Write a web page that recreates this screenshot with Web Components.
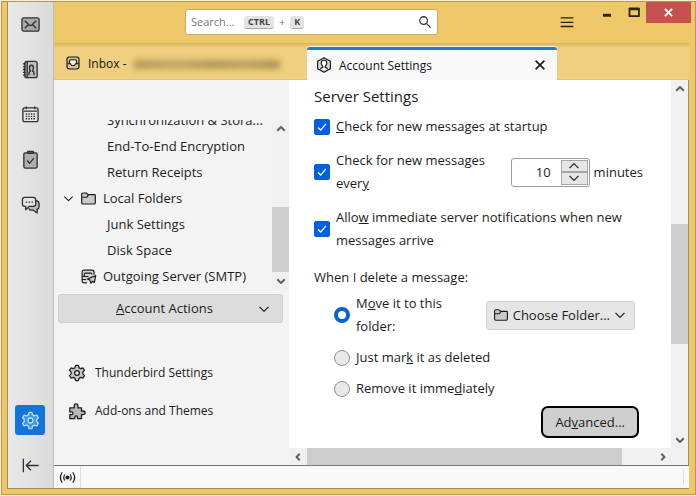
<!DOCTYPE html>
<html lang="en">
<head>
<meta charset="utf-8">
<title>Account Settings</title>
<style>
    html, body { height: 100%; }
    body {
        margin: 0;
        padding: 1px 0 1px 1px;
        box-sizing: border-box;
        background: #f8edcc;
        color: #1c1c20;
        font: 13px/23px "Open Sans", "Noto Sans", sans-serif;
    }
</style>
</head>
<body>
<mail-window></mail-window>

<script>
const resetStyle = `
    *, *::before, *::after { box-sizing: border-box; }
    button, input { font: inherit; color: inherit; margin: 0; }
    button { padding: 0; border: 0; background: none; cursor: pointer; }
    a { color: inherit; text-decoration: none; }
`;

const icons = {
    mail: `<rect x="1" y="3" width="18" height="14" rx="2" fill="#aaa"/><path d="M4 6l4.500 4.500Q10 11.500 11.500 10.500L16 6M4 14l3.500-3.500M16 14l-3.500-3.500"/>`,
    book: `<rect x="4" y="1.500" width="13" height="17" rx="2" fill="#bdbdbd"/><path d="M2 4h3M2 7h3M2 10h3M2 13h3M2 16h3M6.500 2v16M8.500 16v-2q0-1.500 1.500-2.500-1-1-1-3.500 0-2.500 2-2.500T13 8q0 2.500-1 3.500 1.700 1 1.700 2.500v2"/>`,
    calendar: `<rect x="2" y="3" width="16" height="14.500" rx="2" fill="#e8e8e8"/><path d="M3 6.500h14M5.500 1.500v3M14.500 1.500v3"/><path d="M5 9.500h11M5 12h11M5 14.500h11" stroke-dasharray="1.500 1.200"/>`,
    tasks: `<rect x="3" y="3" width="14" height="16" rx="1.500" fill="#b0b0b0"/><path d="M7 3.500V1.500h6v2zM6.500 11l2.500 3 4.500-5.500"/>`,
    chat: `<path d="M15.500 6q3.500 0 3.500 3.500v2.500q0 2.500-2 3v4L13 16H9.500L8 14" fill="#bbb"/><path d="M4 2.500h9q2.500 0 2.500 2.500v4.500q0 2.500-2.500 2.500H8.500L5 15.500V12H4q-2.500 0-2.500-2.500V5Q1.500 2.500 4 2.500z" fill="#e5e5e5"/><path d="M5 7.500h7.500" stroke-dasharray="1.500 1.500"/>`,
    gear: `<path d="M8.500 1.500h3l.8 2.600 1.700 1 2.700-.7 1.600 2.700L16.500 9v2l1.800 1.900-1.600 2.700-2.700-.7-1.700 1-.8 2.600h-3l-.8-2.600-1.700-1-2.700.7-1.600-2.700L3.500 11V9L1.700 7.100l1.600-2.700 2.700.7 1.700-1z" fill="var(--icon-fill, #c4c4c4)"/><circle cx="10" cy="10" r="2.600" fill="var(--icon-hole, #f3f3f3)"/>`,
    collapse: `<path d="M2.500 3v14M18.500 10H6M10.500 5L5.500 10l5 5"/>`,
    puzzle: `<path d="M2 6.500h5V5Q6.500 2 8.800 2T11 5v1.500h4V10h1.500q2.500 0 2.500 2t-2.500 2H15v4.500h-4.500V17q0-1.500-1.500-1.500T7.500 17v1.500H2V14h2q1.500 0 1.500-1.500T4 11H2z" fill="#b8b8b8"/>`,
    inbox: `<rect x="2.500" y="2.500" width="15" height="15" rx="3" fill="#d9c591"/><path d="M3 11h4q.5 2.500 3 2.500T13 11h4.500M5.500 11V8q0-2 2-2h5q2 0 2 2v3" fill="#f6ecd0"/>`,
    account: `<path d="M10 1l8 4.300v9.400L10 19l-8-4.300V5.300z" fill="#d8d8d8"/><path d="M5.500 15.500q.5-2 3-2.500v-1.500Q6.500 10 6.500 7.500 6.500 4 10 4t3.500 3.500q0 2.500-2 4V13q2.500.5 3 2.500" fill="#fff"/>`,
    folder: `<path d="M2 5V15q0 1.500 1.500 1.500h13q1.500 0 1.500-1.500V6.500q0-1-1-1H9.500L7.500 3.500h-4Q2 3.500 2 5z" fill="#c9c9c9"/><path d="M2.500 8.500H8l2-3"/>`,
    outgoing: `<path d="M8 17.500H5q-2.500 0-2.500-2.500V5Q2.500 2.500 5 2.500h9q2.500 0 2.500 2.500v3M3 10h7M5 10V7.500Q5 6 6.500 6h6Q14 6 14 7.500M3 13.500h4" fill="#d8d8d8"/><path d="M18.500 9L8.500 13l3 1 1.500 4 2-2.500L17 17z" fill="#ccc"/>`,
    search: `<circle cx="8" cy="8" r="5.500"/><path d="M12 12l6 6"/>`,
    menu: `<path d="M3 5.500h14M3 10.500h14M3 15h14"/>`,
    close: `<path d="M4.500 4.500l11 11M15.500 4.500l-11 11"/>`,
    down: `<path d="M2.500 6.500L10 14l7.500-7.500"/>`,
    up: `<path d="M2.500 13.500L10 6l7.500 7.500"/>`,
    left: `<path d="M13.500 3.500L7 10l6.500 6.500"/>`,
    right: `<path d="M6.500 3.500L13 10l-6.500 6.500"/>`,
    signal: `<circle cx="10" cy="10" r="2" fill="currentColor"/><path d="M6.500 6q-3 4 0 8M13.500 6q3 4 0 8M3 3q-5 7 0 14M17 3q5 7 0 14"/>`,
    minimize: `<path d="M5.500 12.500h9" stroke-width="3.300"/>`,
    maximize: `<path d="M5 5h10.500v8.500H5zM5 6h10.500"/>`
};

class UiIcon extends HTMLElement {

    connectedCallback() {
        if (!this.shadowRoot)
            this.attachShadow({mode: 'open'});
        this.shadowRoot.innerHTML = this.template;
    }

    get template() {
        return `
        <style>
            :host { display: inline-flex; flex: none; width: var(--icon-size, 20px); height: var(--icon-size, 20px); }
            svg { width: 100%; height: 100%; fill: none; stroke: currentColor; overflow: visible;
                stroke-width: ${this.getAttribute('weight') || '1.4'}; stroke-linejoin: round; }
        </style>
        <svg viewBox="0 0 20 20" aria-hidden="true">${icons[this.getAttribute('name')]}</svg>`;
    }
}

/* Shared base: every other element renders its template once */
class UiElement extends HTMLElement {

    connectedCallback() {
        if (this.shadowRoot)
            return;
        this.attachShadow({mode: 'open'});
        this.shadowRoot.innerHTML = `<style>${resetStyle}${this.componentStyle}</style>${this.template}`;
    }
}

class ScrollBar extends UiElement {

    get vertical() {
        return !this.hasAttribute('horizontal');
    }

    get template() {
        const [before, thumb, after] = this.getAttribute('parts').split(' ');
        return `
        <button aria-label="Scroll back"><ui-icon name="${this.vertical ? 'up' : 'left'}" weight="4"></ui-icon></button>
        <div style="flex:${before}"></div>
        <div class="thumb" style="flex:${thumb}"></div>
        <div style="flex:${after}"></div>
        <button aria-label="Scroll forward"><ui-icon name="${this.vertical ? 'down' : 'right'}" weight="4"></ui-icon></button>`;
    }

    get componentStyle() {
        return `
        :host { display: flex; flex: none; flex-direction: ${this.vertical ? 'column' : 'row'};
            ${this.vertical ? 'width' : 'height'}: 17px; background: #f0f0f0; }
        button { flex: none; width: 17px; height: 17px; display: flex; align-items: center; justify-content: center;
            color: #606060; --icon-size: 10px; }
        .thumb { background: #cdcdcd; }`;
    }
}

class SpacesBar extends UiElement {

    get template() {
        return `
        <button aria-label="Mail"><ui-icon name="mail"></ui-icon></button>
        <button aria-label="Address Book"><ui-icon name="book"></ui-icon></button>
        <button aria-label="Calendar"><ui-icon name="calendar"></ui-icon></button>
        <button aria-label="Tasks"><ui-icon name="tasks"></ui-icon></button>
        <button aria-label="Chat"><ui-icon name="chat"></ui-icon></button>
        <div class="gap"></div>
        <button class="active" aria-label="Settings"><ui-icon name="gear"></ui-icon></button>
        <button aria-label="Collapse"><ui-icon name="collapse"></ui-icon></button>`;
    }

    get componentStyle() {
        return `
        :host { display: flex; flex-direction: column; align-items: center; gap: 15px; flex: none; width: 46px;
            padding: 7px 1px 8px 0; border-right: 1px solid #bdbdbd;
            background: linear-gradient(90deg, #e9e9e9, #dadada); }
        button { width: 30px; height: 30px; border-radius: 3px; display: flex; align-items: center; justify-content: center;
            color: #303034; --icon-size: 19px; }
        .gap { flex: 1; }
        .active { background: #1373d9; color: #b9e0ff; --icon-fill: #3f97ea; --icon-hole: #1373d9; }`;
    }
}

class TitleBar extends UiElement {

    get template() {
        return `
        <div class="search">
            <input type="text" placeholder="Search..." aria-label="Search">
            <kbd>CTRL</kbd><span>+</span><kbd>K</kbd>
            <button class="find" aria-label="Find"><ui-icon name="search" weight="1.800"></ui-icon></button>
        </div>
        <button class="menu" aria-label="Menu"><ui-icon name="menu" weight="1.400"></ui-icon></button>
        <div class="controls">
            <button aria-label="Minimize"><ui-icon name="minimize"></ui-icon></button>
            <button aria-label="Maximize"><ui-icon name="maximize" weight="2"></ui-icon></button>
            <button class="close" aria-label="Close"><ui-icon name="close" weight="3"></ui-icon></button>
        </div>`;
    }

    get componentStyle() {
        return `
        :host { display: flex; align-items: flex-start; justify-content: space-between; flex: none; height: 41px;
            margin-right: -2px; padding-left: 131px; }
        .search { display: flex; align-items: center; gap: 5px; flex: 0 1 253px; height: 26px; margin-top: 7px; padding: 0 5px;
            background: #fff; border: 1px solid #c9ab62; border-radius: 3px; line-height: 18px; font-size: 11px; color: #6c6c70; }
        input { width: 48px; padding: 0; border: 0; outline: 0; background: none; }
        input::placeholder { color: #77777b; }
        kbd { font: bold 9px/12px "Open Sans", sans-serif; padding: 0 4px; color: #444; background: #e3e3e3;
            border-bottom: 1px solid #aaa; border-radius: 3px; }
        .find { margin-left: auto; height: 14px; color: #333; --icon-size: 14px; }
        .menu { margin: 11px 0 0 auto; height: 18px; --icon-size: 18px; color: #222; }
        .controls { display: flex; margin-left: 17px; color: #2b2410; --icon-size: 18px; }
        .controls button { width: 27px; height: 21px; display: flex; align-items: center; justify-content: center; }
        .controls .close { width: 45px; margin-left: -1px; background: #c75050; color: #fff; --icon-size: 13px; }`;
    }
}

class TabStrip extends UiElement {

    get template() {
        return `
        <button class="tab" role="tab"><ui-icon name="inbox"></ui-icon><span>Inbox - </span><i class="hidden-address"></i></button>
        <div class="tab selected" role="tab" aria-selected="true">
            <ui-icon name="account"></ui-icon><span>Account Settings</span>
            <button aria-label="Close tab"><ui-icon name="close" weight="2"></ui-icon></button>
        </div>`;
    }

    get componentStyle() {
        return `
        :host { display: flex; flex: none; height: 37px; padding-top: 4px; font-size: 12px;
            background: linear-gradient(#d8b762, #f0d07e 5px); border-bottom: 1px solid #d8c393; }
        .tab { display: flex; align-items: center; gap: 7px; flex: 0 1 253px; min-width: 0; padding: 0 11px;
            color: #15141a; --icon-size: 16px; white-space: nowrap; }
        .selected { flex-basis: 250px; background: #f9f9f9; border-top: 3px solid #1f7ad0; border-radius: 3px 3px 0 0;
            margin-bottom: -1px; box-shadow: 0 -1px 0 #fbf3dd; padding: 0 9px; }
        .selected button { margin-left: auto; height: 16px; --icon-size: 16px; }
        .hidden-address { width: 146px; height: 9px; filter: blur(3px); opacity: .6; margin-top: 3px;
            background: linear-gradient(90deg, #8a7440, #a48c52 30%, #86713f 55%, #9a834b 75%, #7b683a); }`;
    }
}

class TreeRow extends UiElement {

    get template() {
        return `${this.hasAttribute('open') ? '<ui-icon class="twisty" name="down" weight="2"></ui-icon>' : ''}
        ${this.hasAttribute('icon') ? `<ui-icon name="${this.getAttribute('icon')}"></ui-icon>` : ''}
        <span><slot></slot></span>`;
    }

    get componentStyle() {
        const level = this.hasAttribute('icon') ? (this.hasAttribute('open') ? '9px' : '26px') : '53px';
        return `
        :host { display: flex; align-items: center; gap: 6px; flex: none; height: 26px; padding-left: ${level}; --icon-size: 17px; }
        .twisty { --icon-size: 11px; }
        span { white-space: nowrap; }`;
    }
}

class AccountPane extends UiElement {

    get template() {
        return `
        <div class="tree">
            <div class="rows">
                <tree-row>Synchronization &amp; Stora...</tree-row>
                <tree-row>End-To-End Encryption</tree-row>
                <tree-row>Return Receipts</tree-row>
                <tree-row icon="folder" open>Local Folders</tree-row>
                <tree-row>Junk Settings</tree-row>
                <tree-row>Disk Space</tree-row>
                <tree-row icon="outgoing">Outgoing Server (SMTP)</tree-row>
            </div>
            <scroll-bar parts="69 65 0"></scroll-bar>
        </div>
        <button class="actions"><span><u>A</u>ccount Actions</span><ui-icon name="down" weight="2"></ui-icon></button>
        <nav>
            <a href="#settings"><ui-icon name="gear"></ui-icon>Thunderbird Settings</a>
            <a href="#addons"><ui-icon name="puzzle"></ui-icon>Add-ons and Themes</a>
        </nav>`;
    }

    get componentStyle() {
        return `
        :host { display: flex; flex-direction: column; flex: 0 0 235px; padding-top: 40px; background: #f3f3f3; }
        .tree { display: flex; height: 169px; }
        .rows { flex: 1; display: flex; flex-direction: column; justify-content: flex-end; overflow: hidden; }
        .actions { display: flex; align-items: center; height: 29px; margin: 5px 6px 0 4px; padding: 0 12px;
            background: #dcdcdc; border: 1px solid #cecece; border-radius: 3px; --icon-size: 12px; }
        .actions span { flex: 1; }
        nav { display: flex; flex-direction: column; gap: 15px; margin-top: 38px; padding-left: 14px; font-size: 12px; }
        nav a { display: flex; align-items: center; gap: 9px; --icon-size: 18px; }`;
    }
}

/* A check box or radio with its label; type, name and checked are passed on */
class SettingOption extends UiElement {

    get template() {
        const type = this.getAttribute('type') || 'checkbox';
        return `
        <label><input type="${type}" name="${this.getAttribute('name') || ''}" ${this.hasAttribute('checked') ? 'checked' : ''}>
            <span class="mark"><svg viewBox="0 0 16 16"><path d="M3.500 8.500l3 3 6-7"/></svg></span>
            <span><slot></slot></span></label>`;
    }

    get componentStyle() {
        return `
        :host { display: block; min-width: 0; }
        label { display: flex; align-items: center; gap: 6px; }
        input { position: absolute; opacity: 0; width: 16px; height: 16px; }
        .mark { flex: none; display: flex; width: 16px; height: 16px; background: #e9e9e9; border: 1px solid #8f8f9d; border-radius: 2px; }
        svg { flex: 1; fill: none; stroke: #fff; stroke-width: 1.500; visibility: hidden; }
        input[type=checkbox]:checked + .mark { background: #0060df; border-color: #0060df; }
        input[type=checkbox]:checked + .mark svg { visibility: visible; }
        input[type=radio] + .mark { border-radius: 50%; }
        input[type=radio]:checked + .mark { background: #fff; border: 4px solid #0a62cf; }
        input:focus-visible + .mark { outline: 2px solid #0060df; outline-offset: 2px; }`;
    }
}

class NumberField extends UiElement {

    connectedCallback() {
        super.connectedCallback();
        const input = this.shadowRoot.querySelector('input');
        const [up, down] = this.shadowRoot.querySelectorAll('button');
        up.onclick = () => input.stepUp();
        down.onclick = () => input.stepDown();
    }

    get template() {
        return `
        <div class="box">
            <input id="count" type="number" min="1" value="${this.getAttribute('value')}">
            <div class="spin">
                <button aria-label="Increase"><ui-icon name="up" weight="2"></ui-icon></button>
                <button aria-label="Decrease"><ui-icon name="down" weight="2"></ui-icon></button>
            </div>
        </div>
        <label for="count"><slot></slot></label>`;
    }

    get componentStyle() {
        return `
        :host { display: flex; align-items: center; gap: 4px; flex: none; }
        .box { display: flex; width: 79px; height: 29px; padding: 1px; background: #fff; border: 1px solid #9a9aa0; border-radius: 3px; }
        input { flex: 1; min-width: 0; padding: 0 10px 0 0; border: 0; outline: 0; background: none; text-align: right; appearance: textfield; }
        input::-webkit-inner-spin-button { appearance: none; }
        .spin { display: flex; flex-direction: column; width: 27px; }
        .spin button { flex: 1; min-height: 0; display: flex; align-items: center; justify-content: center;
            background: #e6e6e6; border: 1px solid #a5a5a5; --icon-size: 12px; }`;
    }
}

class ServerSettings extends UiElement {

    get template() {
        return `
        <div class="view">
            <form onsubmit="return false">
                <h2>Server Settings</h2>
                <setting-option checked><u>C</u>heck for new messages at startup</setting-option>
                <div class="line every">
                    <setting-option checked>Check for new messages ever<u>y</u></setting-option>
                    <number-field value="10">minutes</number-field>
                </div>
                <setting-option checked>Allo<u>w</u> immediate server notifications when new messages arrive</setting-option>
                <fieldset>
                    <legend>When I delete a message:</legend>
                    <div class="line move">
                        <setting-option type="radio" name="delete" checked>M<u>o</u>ve it to this folder:</setting-option>
                        <button class="choose"><ui-icon name="folder"></ui-icon>Choose Folder...<ui-icon class="arrow" name="down" weight="2"></ui-icon></button>
                    </div>
                    <setting-option type="radio" name="delete">Just mar<u>k</u> it as deleted</setting-option>
                    <setting-option type="radio" name="delete">Remove it imme<u>d</u>iately</setting-option>
                </fieldset>
                <button class="advanced">Ad<u>v</u>anced...</button>
            </form>
            <scroll-bar horizontal parts="1 315 32"></scroll-bar>
        </div>
        <div class="side"><scroll-bar parts="127 120 87"></scroll-bar></div>`;
    }

    get componentStyle() {
        return `
        :host { display: flex; flex: 1; min-width: 0; background: #fff; }
        .view { display: flex; flex-direction: column; flex: 1; min-width: 0; }
        .side { display: flex; padding-bottom: 17px; background: #f0f0f0; }
        form { display: flex; flex-direction: column; flex: 1; gap: 11px; min-height: 0; padding: 5px 28px 0 25px; }
        h2 { margin: 0 0 -4px; font-size: 15px; font-weight: 500; }
        .line { display: flex; align-items: center; justify-content: space-between; }
        .every setting-option { flex: 0 1 172px; }
        .move { padding-right: 8px; }
        .move setting-option { flex: 0 1 128px; }
        fieldset { display: flex; flex-direction: column; gap: 8px; margin: 3px 0 0; padding: 3px 0 0 20px; border: 0; min-width: 0; }
        legend { margin-left: -20px; padding: 0; }
        .choose { display: flex; align-items: center; gap: 4px; height: 29px; padding: 0 8px 0 6px; background: #e5e5e5;
            border: 1px solid #d2d2d2; border-radius: 3px; --icon-size: 16px; white-space: nowrap; }
        .arrow { --icon-size: 12px; }
        .advanced { align-self: flex-end; margin: -5px 4px 0 0; height: 32px; padding: 0 12px; background: #cfcfcf;
            border: 2px solid #000; border-radius: 7px; }`;
    }
}

class StatusBar extends UiElement {

    get template() {
        return `<button aria-label="Connection"><ui-icon name="signal" weight="1.600"></ui-icon></button><i></i>`;
    }

    get componentStyle() {
        return `
        :host { display: flex; justify-content: space-between; flex: none; height: 23px; background: #f9f9f9; border-top: 1px solid #75757a; }
        button { display: flex; align-items: center; justify-content: center; width: 27px; border-right: 1px solid #dedede; --icon-size: 15px; }
        i { width: 1px; margin: 4px 5px; background: #dcdcdc; }`;
    }
}

class MailWindow extends UiElement {

    get template() {
        return `
        <div class="frame">
            <spaces-bar></spaces-bar>
            <main>
                <title-bar></title-bar>
                <tab-strip></tab-strip>
                <div class="panes">
                    <account-pane></account-pane>
                    <server-settings></server-settings>
                </div>
                <status-bar></status-bar>
            </main>
        </div>`;
    }

    get componentStyle() {
        return `
        :host { display: flex; height: 100%; box-sizing: border-box; padding: 0 6px 5px 5px; background: #eec868; border: 1px solid #b39a5b; }
        .frame { display: flex; flex: 1; min-width: 0; border: solid #a38d58; border-width: 0 0 1px 1px; }
        main { display: flex; flex-direction: column; flex: 1; min-width: 0; }
        .panes { display: flex; flex: 1; min-height: 0; border-right: 1px solid #a38d58; }`;
    }
}

window.customElements.define('ui-icon', UiIcon);
window.customElements.define('scroll-bar', ScrollBar);
window.customElements.define('spaces-bar', SpacesBar);
window.customElements.define('title-bar', TitleBar);
window.customElements.define('tab-strip', TabStrip);
window.customElements.define('tree-row', TreeRow);
window.customElements.define('account-pane', AccountPane);
window.customElements.define('setting-option', SettingOption);
window.customElements.define('number-field', NumberField);
window.customElements.define('server-settings', ServerSettings);
window.customElements.define('status-bar', StatusBar);
window.customElements.define('mail-window', MailWindow);
</script>
</body>
</html>
